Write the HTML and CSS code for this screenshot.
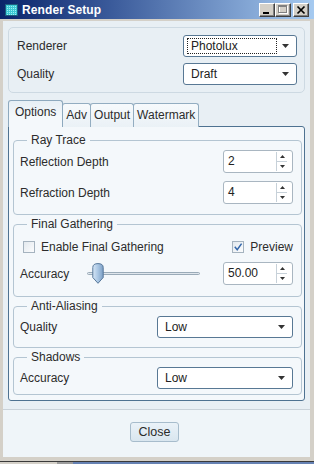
FILE: index.html
```html
<!DOCTYPE html>
<html>
<head>
<meta charset="utf-8">
<title>Render Setup</title>
<link rel="stylesheet" href="styles.css">
</head>
<body>
<div class="window">
  <div class="titlebar">
    <svg class="app-icon" width="13" height="12" viewBox="0 0 13 12">
      <defs>
        <pattern id="dots" width="2" height="2" patternUnits="userSpaceOnUse">
          <rect width="2" height="2" fill="#3cc8d4"/>
          <rect width="1" height="1" fill="#9cf0f4"/>
        </pattern>
      </defs>
      <rect x="0.5" y="0.5" width="12" height="11" fill="url(#dots)" stroke="#1d5c7c"/>
    </svg>
    <span class="title">Render Setup</span>
    <div class="caption-buttons">
      <div class="cbtn">
        <svg width="14" height="12" viewBox="0 0 14 12"><rect x="3" y="8" width="6" height="2" fill="#000"/></svg>
      </div>
      <div class="cbtn">
        <svg width="14" height="12" viewBox="0 0 14 12">
          <rect x="3.5" y="2.5" width="8" height="7" fill="none" stroke="#fff"/>
          <rect x="2.5" y="1.5" width="8" height="7" fill="none" stroke="#808080"/>
          <rect x="2" y="1.5" width="9" height="1.5" fill="#808080"/>
        </svg>
      </div>
      <div class="cbtn cbtn-close">
        <svg width="14" height="12" viewBox="0 0 14 12"><path d="M3.5 2.5 L10.5 9.5 M10.5 2.5 L3.5 9.5" stroke="#000" stroke-width="1.7"/></svg>
      </div>
    </div>
  </div>

  <div class="client">
    <div class="main">
      <div class="topbox">
        <div class="row">
          <span class="label">Renderer</span>
          <div class="combo combo-narrow">
            <span class="combo-text focused">Photolux</span>
            <svg class="combo-arrow" width="7" height="4" viewBox="0 0 7 4"><polygon points="0,0 7,0 3.5,4" fill="#333"/></svg>
          </div>
        </div>
        <div class="row">
          <span class="label">Quality</span>
          <div class="combo combo-narrow">
            <span class="combo-text">Draft</span>
            <svg class="combo-arrow" width="7" height="4" viewBox="0 0 7 4"><polygon points="0,0 7,0 3.5,4" fill="#333"/></svg>
          </div>
        </div>
      </div>

      <div class="tabs">
        <div class="tab tab-active">Options</div>
        <div class="tab">Adv</div>
        <div class="tab">Output</div>
        <div class="tab">Watermark</div>
      </div>

      <div class="panel">
        <fieldset class="group group-ray">
          <legend>Ray Trace</legend>
          <div class="row">
            <span class="label">Reflection Depth</span>
            <div class="spinner">
              <span class="spin-value">2</span>
              <div class="spin-arrows">
                <span class="spin-up"><svg width="5" height="3" viewBox="0 0 5 3"><polygon points="2.5,0 5,3 0,3" fill="#333"/></svg></span>
                <span class="spin-down"><svg width="5" height="3" viewBox="0 0 5 3"><polygon points="0,0 5,0 2.5,3" fill="#333"/></svg></span>
              </div>
            </div>
          </div>
          <div class="row">
            <span class="label">Refraction Depth</span>
            <div class="spinner">
              <span class="spin-value">4</span>
              <div class="spin-arrows">
                <span class="spin-up"><svg width="5" height="3" viewBox="0 0 5 3"><polygon points="2.5,0 5,3 0,3" fill="#333"/></svg></span>
                <span class="spin-down"><svg width="5" height="3" viewBox="0 0 5 3"><polygon points="0,0 5,0 2.5,3" fill="#333"/></svg></span>
              </div>
            </div>
          </div>
        </fieldset>

        <fieldset class="group group-fg">
          <legend>Final Gathering</legend>
          <div class="row check-row">
            <label class="check">
              <span class="box"></span>
              <span>Enable Final Gathering</span>
            </label>
            <label class="check">
              <span class="box">
                <svg width="10" height="10" viewBox="0 0 10 10"><path d="M1.8 4.8 L4.2 7.8 L8.6 1.6" fill="none" stroke="#3467aa" stroke-width="1.5"/></svg>
              </span>
              <span>Preview</span>
            </label>
          </div>
          <div class="row slider-row">
            <span class="label slider-label">Accuracy</span>
            <div class="slider">
              <div class="track"></div>
              <svg class="thumb" width="12" height="21" viewBox="0 0 12 21">
                <defs>
                  <linearGradient id="tg" x1="0" y1="0" x2="1" y2="0">
                    <stop offset="0" stop-color="#d6e6f5"/>
                    <stop offset="0.5" stop-color="#a9c6e3"/>
                    <stop offset="1" stop-color="#7c9fc4"/>
                  </linearGradient>
                </defs>
                <path d="M0.8 4.5 Q0.8 0.6 6 0.6 Q11.2 0.6 11.2 4.5 L11.2 14.5 L6 20.3 L0.8 14.5 Z" fill="url(#tg)" stroke="#58789a"/>
              </svg>
            </div>
            <div class="spinner">
              <span class="spin-value">50.00</span>
              <div class="spin-arrows">
                <span class="spin-up"><svg width="5" height="3" viewBox="0 0 5 3"><polygon points="2.5,0 5,3 0,3" fill="#333"/></svg></span>
                <span class="spin-down"><svg width="5" height="3" viewBox="0 0 5 3"><polygon points="0,0 5,0 2.5,3" fill="#333"/></svg></span>
              </div>
            </div>
          </div>
        </fieldset>

        <fieldset class="group group-aa">
          <legend>Anti-Aliasing</legend>
          <div class="row">
            <span class="label">Quality</span>
            <div class="combo combo-wide">
              <span class="combo-text">Low</span>
              <svg class="combo-arrow" width="7" height="4" viewBox="0 0 7 4"><polygon points="0,0 7,0 3.5,4" fill="#333"/></svg>
            </div>
          </div>
        </fieldset>

        <fieldset class="group group-sh">
          <legend>Shadows</legend>
          <div class="row">
            <span class="label">Accuracy</span>
            <div class="combo combo-wide">
              <span class="combo-text">Low</span>
              <svg class="combo-arrow" width="7" height="4" viewBox="0 0 7 4"><polygon points="0,0 7,0 3.5,4" fill="#333"/></svg>
            </div>
          </div>
        </fieldset>
      </div>
    </div>

    <div class="footer">
      <button class="btn">Close</button>
    </div>
  </div>
</div>
<div class="desktop"></div>
</body>
</html>
```

FILE: styles.css
```css
* {
  box-sizing: border-box;
}

html, body {
  margin: 0;
  padding: 0;
}

body {
  width: 314px;
  height: 464px;
  overflow: hidden;
  font-family: "Liberation Sans", Arial, sans-serif;
  font-size: 12px;
  color: #2c2c2c;
  background: #6682b3;
}

.window {
  height: 461px;
  background: #d4d0c8;
  display: flex;
  flex-direction: column;
}

/* ---------- title bar ---------- */
.titlebar {
  height: 19px;
  flex: none;
  display: flex;
  align-items: center;
  padding: 0 5px 0 5px;
  background: linear-gradient(to right, #0a246a 0%, #3a5a9a 35%, #a6caf0 100%);
}

.app-icon {
  display: block;
  flex: none;
}

.title {
  margin-left: 4px;
  color: #fff;
  font-weight: bold;
  font-size: 12px;
  letter-spacing: 0.1px;
}

.caption-buttons {
  margin-left: auto;
  display: flex;
  align-items: center;
}

.cbtn {
  width: 16px;
  height: 14px;
  background: #d4d0c8;
  border: 1px solid;
  border-color: #ffffff #404040 #404040 #ffffff;
  box-shadow: inset -1px -1px 0 #808080;
  display: flex;
  align-items: flex-start;
  justify-content: flex-start;
}

.cbtn svg {
  display: block;
}

.cbtn-close {
  margin-left: 2px;
}

/* ---------- client ---------- */
.client {
  flex: 1;
  margin: 2px 4px 4px 3px;
  display: flex;
  flex-direction: column;
  background: #e8eff4;
}

.main {
  flex: 1;
  display: flex;
  flex-direction: column;
  padding: 6px 5px 8px 5px;
}

.topbox {
  border: 1px solid #cdd9e2;
  border-radius: 5px;
  padding: 7px 7px 7px 8px;
  display: flex;
  flex-direction: column;
  gap: 6px;
}

.row {
  display: flex;
  align-items: center;
  justify-content: space-between;
}

.label {
  white-space: nowrap;
}

/* ---------- combo ---------- */
.combo {
  height: 22px;
  background: #fff;
  border: 1px solid #587894;
  border-radius: 3px;
  display: flex;
  align-items: center;
  padding: 0 7px 0 3px;
}

.combo-narrow {
  width: 114px;
}

.combo-wide {
  width: 136px;
}

.combo-text {
  flex: 1;
  padding-left: 3px;
  line-height: 14px;
  border: 1px solid transparent;
  color: #222;
}

.combo-text.focused {
  border: 1px dotted #222;
  margin-right: 5px;
}

.combo-arrow {
  display: block;
  flex: none;
}

/* ---------- tabs ---------- */
.tabs {
  display: flex;
  align-items: flex-end;
  height: 27px;
  margin-top: 7px;
  margin-bottom: -1px;
  position: relative;
  z-index: 1;
}

.tab {
  height: 24px;
  border: 1px solid #93adc1;
  border-bottom: none;
  border-radius: 3px 3px 0 0;
  background: linear-gradient(#f7fafc, #eaf1f6);
  padding: 4px 3px 0 3px;
  line-height: 15px;
  white-space: nowrap;
  color: #2c2c2c;
}

.tab + .tab {
  margin-left: -1px;
}

.tab-active {
  height: 27px;
  padding: 4px 6px 0 6px;
  background: linear-gradient(#e7eff5, #f4f8fb 60%);
  border-color: #8ea9be;
  position: relative;
  z-index: 2;
}

/* ---------- panel ---------- */
.panel {
  flex: 1;
  border: 1px solid #4e7291;
  border-radius: 0 3px 3px 3px;
  background: #f4f8fb;
  padding: 6px 2px 3px 4px;
  display: flex;
  flex-direction: column;
  gap: 2px;
}

.group {
  margin: 0;
  border: 1px solid #b4c5d2;
  border-radius: 4px;
  padding: 3px 8px 7px 6px;
  min-width: 0;
}

.group legend {
  margin-left: 7px;
  padding: 0 4px;
  line-height: 14px;
  font-size: 12px;
  color: #2c2c2c;
}

.group-ray {
  padding-bottom: 10px;
}

.group-ray .row + .row {
  margin-top: 8px;
}

.group-fg {
  padding-bottom: 11px;
}

.group-aa {
  padding-bottom: 9px;
}

.group-sh {
  padding-bottom: 5px;
}

/* ---------- spinner ---------- */
.spinner {
  width: 70px;
  height: 23px;
  background: #fff;
  border: 1px solid #a9b6c1;
  border-radius: 3px;
  display: flex;
}

.spin-value {
  flex: 1;
  padding-left: 4px;
  line-height: 21px;
  color: #222;
}

.spin-arrows {
  width: 16px;
  margin: 1px 0;
  border-left: 1px solid #c7d1d9;
  display: flex;
  flex-direction: column;
}

.spin-up,
.spin-down {
  flex: 1;
  display: flex;
  align-items: center;
  justify-content: center;
  margin-right: 5px;
}

.spin-up {
  border-bottom: 1px solid #c7d1d9;
}

.spin-up svg,
.spin-down svg {
  display: block;
}

/* ---------- checkboxes ---------- */
.check-row {
  height: 18px;
  margin-top: 4px;
  padding-left: 3px;
}

.check {
  display: flex;
  align-items: center;
  gap: 6px;
  white-space: nowrap;
}

.box {
  width: 12px;
  height: 12px;
  border: 1px solid #a5b3bf;
  background: linear-gradient(135deg, #e3e9ee, #fbfcfd);
  display: flex;
  align-items: center;
  justify-content: center;
}

.box svg {
  display: block;
}

/* ---------- slider ---------- */
.slider-row {
  margin-top: 6px;
  justify-content: flex-start;
}

.slider-label {
  width: 67px;
}

.slider {
  width: 113px;
  height: 23px;
  position: relative;
  display: flex;
  align-items: center;
}

.track {
  width: 100%;
  height: 3px;
  border: 1px solid #9aabb8;
  border-radius: 2px;
  background: #dfe6ec;
}

.thumb {
  position: absolute;
  left: 5px;
  top: 1px;
  display: block;
}

.slider-row .spinner {
  margin-left: auto;
}

/* ---------- footer ---------- */
.footer {
  height: 48px;
  flex: none;
  border-top: 1px solid #c9d2d9;
  background: #eff5f9;
  display: flex;
  justify-content: center;
  align-items: flex-start;
  padding: 12px 4px 0 0;
}

.btn {
  width: 49px;
  height: 20px;
  padding: 0;
  border: 1px solid #a7bccc;
  border-radius: 3px;
  background: linear-gradient(#eaf2f8, #d9e6ef);
  font-family: "Liberation Sans", Arial, sans-serif;
  font-size: 12.5px;
  color: #2a2a2a;
}

/* ---------- desktop strip ---------- */
.desktop {
  height: 3px;
  border-top: 1px solid #3a3a3a;
  background: linear-gradient(to right, #d4d0c8 0 57px, #9c9c9c 57px 73px, #6682b3 73px);
}
```
